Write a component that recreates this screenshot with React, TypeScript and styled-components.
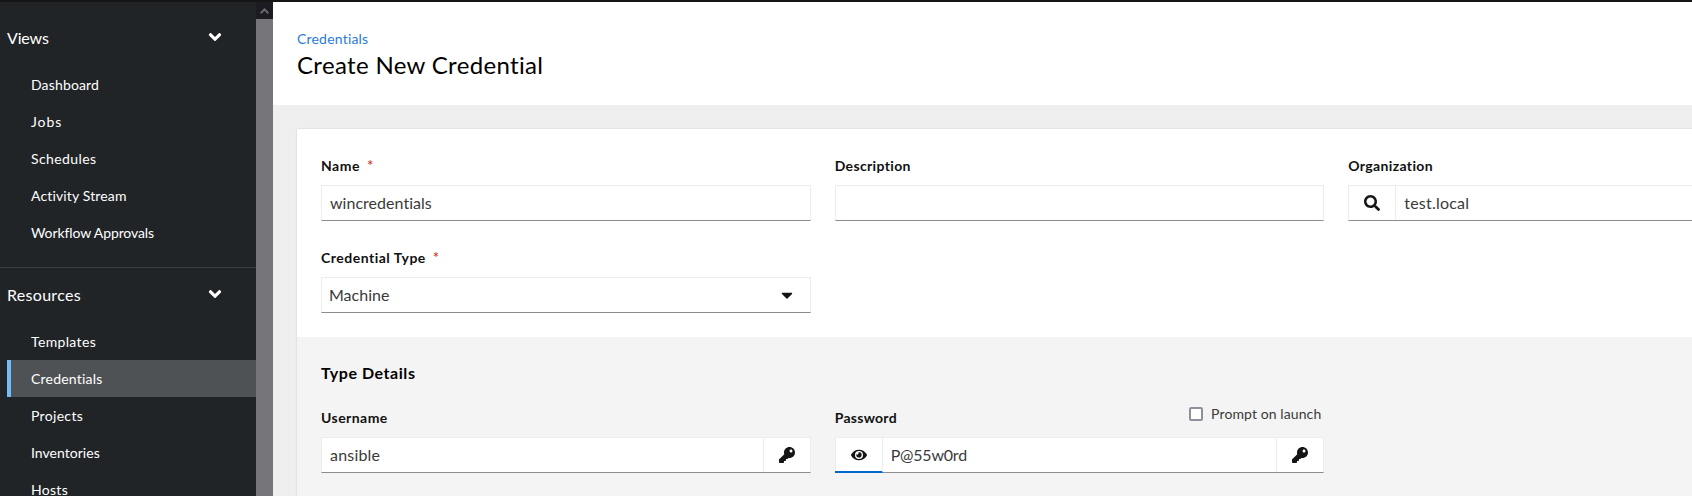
import React from 'react';
import styled, { createGlobalStyle, css } from 'styled-components';
import { FaAngleDown, FaCaretDown, FaEye, FaKey, FaSearch } from 'react-icons/fa';

const GlobalStyle = createGlobalStyle`
  *, *::before, *::after { box-sizing: border-box; }
  html, body { margin: 0; height: 100%; overflow: hidden; }
  body {
    font-family: Lato, "Open Sans", sans-serif;
    font-size: 14px;
    line-height: 21px;
    color: #151515;
    font-variant-ligatures: none;
    background: #efefef;
  }
`;

const Page = styled.div`
  display: grid;
  grid-template-columns: 256px 17px minmax(0, 1fr);
  height: 496px;
  border-top: 2px solid #151515;
  overflow: hidden;
`;

const Sidebar = styled.nav`
  background: #212427;
  color: #fff;
  padding-top: 9px;
  overflow: hidden;
`;

const NavSection = styled.section`
  padding-bottom: 16px;
  & + & { border-top: 1px solid #3c3f42; }
`;

const NavHeading = styled.div`
  display: flex;
  align-items: center;
  justify-content: space-between;
  height: 55px;
  padding: 0 31px 3px 7px;
  font-size: 16px;
  svg { margin-top: -1px; }
`;

const NavList = styled.ul`
  list-style: none;
  margin: 0;
  padding: 0 0 0 7px;
`;

const NavItem = styled.li<{ $active?: boolean }>`
  height: 37px;
  padding: 9px 0 0 20px;
  line-height: 20px;
  border-left: 4px solid transparent;
  ${p => p.$active && css`
    background: #4f5255;
    border-left-color: #73bcf7;
  `}
`;

const Spaced = styled.span<{ $track: number }>`
  letter-spacing: ${p => p.$track}px;
  white-space: nowrap;
`;

const Scrollbar = styled.div`
  background: #76767a;
`;

const ScrollUp = styled.div`
  display: flex;
  align-items: center;
  justify-content: center;
  height: 17px;
  background: #1c1b22;
`;

const Main = styled.main`
  min-width: 0;
  overflow: hidden;
  background: #efefef;
`;

const PageHeader = styled.header`
  height: 103px;
  padding: 27px 24px 0;
  background: #fff;
`;

const Breadcrumb = styled.a`
  display: block;
  color: #2b7bd9;
  line-height: 20px;
`;

const Title = styled.h1`
  margin: 1px 0 0;
  font-size: 24px;
  font-weight: 400;
  line-height: 30px;
  color: #000;
`;

const Card = styled.form`
  width: 1565px;
  height: 420px;
  margin: 24px 0 0 24px;
  background: #fff;
  box-shadow: 0 0 2px rgba(3, 3, 3, 0.14);
`;

const FieldGrid = styled.div`
  display: grid;
  grid-template-columns: repeat(3, minmax(0, 1fr));
  gap: 24px;
  padding: 24px;
`;

const TypeDetails = styled.section`
  background: #f4f4f4;
  height: 220px;
`;

const SectionTitle = styled.h2`
  margin: 0;
  padding: 25px 24px 0;
  height: 44px;
  font-size: 16px;
  font-weight: 700;
  color: #000;
`;

const LabelRow = styled.div`
  display: flex;
  align-items: flex-start;
  justify-content: space-between;
  height: 32px;
`;

const Label = styled.label`
  padding-top: 2px;
  font-weight: 700;
  color: #111;
`;

const Required = styled.span`
  margin-left: 7px;
  font-size: 15px;
  line-height: 1;
  color: #c9190b;
  font-weight: 400;
`;

const Control = styled.div`
  display: flex;
  height: 36px;
  background: #fff;
  border: 1px solid #ededed;
  border-bottom-color: #8a8d90;
`;

const Value = styled.div<{ $inset?: number }>`
  flex: 1;
  padding: 5px 0 0 ${p => p.$inset ?? 8}px;
  font-size: 16px;
  line-height: 24px;
  color: #3a3a3a;
`;

const Addon = styled.div<{ $side: 'left' | 'right' | 'none'; $active?: boolean }>`
  display: flex;
  align-items: center;
  justify-content: center;
  width: 47px;
  ${p => p.$side === 'left' && css`border-right: 1px solid #ededed;`}
  ${p => p.$side === 'right' && css`border-left: 1px solid #ededed;`}
  ${p => p.$side === 'none' && css`padding-left: 1px;`}
  ${p => p.$active && css`
    margin: 0 0 -1px -1px;
    width: 48px;
    padding: 1px 0 0 1px;
    border-bottom: 2px solid #06c;
  `}
`;

const CheckOption = styled.label`
  display: flex;
  align-items: flex-start;
  gap: 8px;
  margin: 2px 3px 0 0;
  line-height: 14px;
  color: #3a3a3a;
`;

const CheckBox = styled.span`
  width: 14px;
  height: 14px;
  border: 2px solid #8f8f9d;
  border-radius: 2px;
  background: #fff;
`;

type Word = [text: string, track: number];

const Text = ({ w }: { w: Word }) => <Spaced $track={w[1]}>{w[0]}</Spaced>;

const sections: { title: Word; items: Word[] }[] = [
  {
    title: ['Views', -0.15],
    items: [['Dashboard', 0.15], ['Jobs', 0.9], ['Schedules', 0.4], ['Activity Stream', 0.15], ['Workflow Approvals', -0.1]],
  },
  {
    title: ['Resources', 0.3],
    items: [['Templates', 0.35], ['Credentials', 0.22], ['Projects', 0.32], ['Inventories', 0.03], ['Hosts', 0.3]],
  },
];

const Field = ({ label, required, option, children }: {
  label: Word; required?: boolean; option?: React.ReactNode; children?: React.ReactNode;
}) => (
  <div>
    <LabelRow>
      <Label><Text w={label} />{required && <Required>*</Required>}</Label>
      {option}
    </LabelRow>
    <Control>{children}</Control>
  </div>
);

export default function App() {
  return (
    <Page>
      <GlobalStyle />
      <Sidebar>
        {sections.map(s => (
          <NavSection key={s.title[0]}>
            <NavHeading><Text w={s.title} /><FaAngleDown size={20} /></NavHeading>
            <NavList>
              {s.items.map(i => (
                <NavItem key={i[0]} $active={i[0] === 'Credentials'}><Text w={i} /></NavItem>
              ))}
            </NavList>
          </NavSection>
        ))}
      </Sidebar>
      <Scrollbar>
        <ScrollUp>
          <svg width="9" height="6" viewBox="0 0 9 6" fill="none" stroke="#68686d" strokeWidth="2">
            <path d="M0.7 5.2 4.5 1.4 8.3 5.2" />
          </svg>
        </ScrollUp>
      </Scrollbar>
      <Main>
        <PageHeader>
          <Breadcrumb><Text w={['Credentials', 0.2]} /></Breadcrumb>
          <Title><Text w={['Create New Credential', 0.34]} /></Title>
        </PageHeader>
        <Card>
          <FieldGrid>
            <Field label={['Name', 0.5]} required><Value><Text w={['wincredentials', 0.03]} /></Value></Field>
            <Field label={['Description', 0.35]} />
            <Field label={['Organization', 0.35]}>
              <Addon $side="left"><FaSearch size={16} /></Addon>
              <Value><Text w={['test.local', 0.2]} /></Value>
            </Field>
            <Field label={['Credential Type', 0.5]} required>
              <Value $inset={7}><Text w={['Machine', 0]} /></Value>
              <Addon $side="none"><FaCaretDown size={18} /></Addon>
            </Field>
          </FieldGrid>
          <TypeDetails>
            <SectionTitle><Text w={['Type Details', 0.55]} /></SectionTitle>
            <FieldGrid>
              <Field label={['Username', 0.45]}>
                <Value><Text w={['ansible', 0.2]} /></Value>
                <Addon $side="right"><FaKey size={16} /></Addon>
              </Field>
              <Field
                label={['Password', 0.28]}
                option={<CheckOption><CheckBox /><Text w={['Prompt on launch', 0.1]} /></CheckOption>}
              >
                <Addon $side="left" $active><FaEye size={16} /></Addon>
                <Value><Text w={['P@55w0rd', -0.2]} /></Value>
                <Addon $side="right"><FaKey size={16} /></Addon>
              </Field>
            </FieldGrid>
          </TypeDetails>
        </Card>
      </Main>
    </Page>
  );
}
